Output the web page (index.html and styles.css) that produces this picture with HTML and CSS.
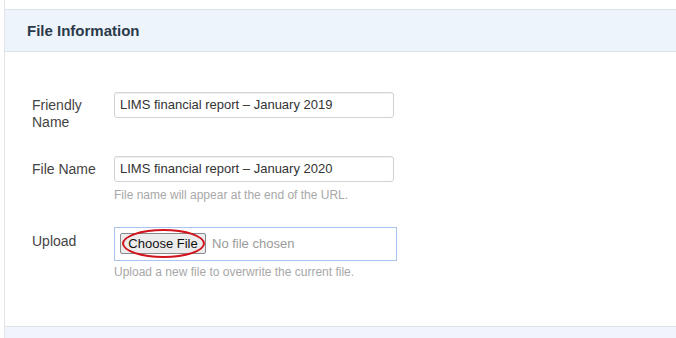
FILE: index.html
```html
<!DOCTYPE html>
<html>
<head>
<meta charset="utf-8">
<link rel="stylesheet" href="styles.css">
</head>
<body>
<div class="page">
  <div class="panel">
    <div class="top-band"></div>
    <div class="panel-header">File Information</div>
    <div class="panel-body">
      <div class="row">
        <label class="label">Friendly Name</label>
        <div class="control">
          <div class="input">LIMS financial report – January 2019</div>
        </div>
      </div>
      <div class="row">
        <label class="label">File Name</label>
        <div class="control">
          <div class="input">LIMS financial report – January 2020</div>
          <div class="help">File name will appear at the end of the URL.</div>
        </div>
      </div>
      <div class="row">
        <label class="label label-upload">Upload</label>
        <div class="control">
          <div class="upload">
            <span class="choose">Choose File</span>
            <span class="nofile">No file chosen</span>
            <span class="circle"></span>
          </div>
          <div class="help help-upload">Upload a new file to overwrite the current file.</div>
        </div>
      </div>
    </div>
    <div class="panel-footer"></div>
  </div>
</div>
</body>
</html>
```

FILE: styles.css
```css
html, body {
  margin: 0;
  padding: 0;
  background: #ffffff;
  font-family: "Liberation Sans", Arial, sans-serif;
}
.page {
  padding-left: 4px;
  height: 338px;
  overflow: hidden;
}
.panel {
  border-left: 1px solid #e1e3e6;
  height: 338px;
  display: flex;
  flex-direction: column;
}
.top-band {
  height: 9px;
  background: #ffffff;
}
.panel-header {
  height: 41px;
  box-sizing: content-box;
  border-top: 1px solid #dae2ea;
  border-bottom: 1px solid #dae2ea;
  background: #eef4fb;
  padding-left: 22px;
  font-size: 15px;
  font-weight: bold;
  color: #2b3a4b;
  line-height: 41px;
}
.panel-body {
  height: 275px;
  flex: none;
  padding-top: 40px;
  box-sizing: border-box;
  border-bottom: 1px solid #dde3ea;
}
.row {
  display: flex;
  padding-left: 27px;
  margin-bottom: 25px;
}
.label {
  width: 82px;
  flex: none;
  font-size: 14px;
  line-height: 17px;
  color: #444;
  padding-top: 5px;
  padding-right: 10px;
  box-sizing: border-box;
}
.label-upload {
  padding-top: 6px;
}
.control {
  display: flex;
  flex-direction: column;
}
.input {
  width: 280px;
  height: 26px;
  box-sizing: border-box;
  border: 1px solid #d3d3d3;
  border-radius: 3px;
  box-shadow: inset 0 1px 1px rgba(0,0,0,0.06);
  padding-left: 5px;
  font-size: 13px;
  line-height: 24px;
  color: #333;
}
.help {
  font-size: 12px;
  line-height: 14px;
  color: #a8a8a8;
  margin-top: 6px;
}
.help-upload {
  margin-top: 4px;
}
.upload {
  position: relative;
  width: 283px;
  height: 34px;
  box-sizing: border-box;
  border: 1px solid #a9c4ee;
  padding: 5px 0 0 5px;
  display: flex;
  align-items: flex-start;
}
.choose {
  display: inline-block;
  width: 86px;
  height: 21px;
  box-sizing: border-box;
  border: 1px solid #8a8a8a;
  border-radius: 2px;
  background: #ececec;
  font-size: 13px;
  line-height: 19px;
  color: #111;
  text-align: center;
}
.nofile {
  font-size: 13px;
  line-height: 21px;
  color: #9a9a9a;
  margin-left: 6px;
}
.circle {
  position: absolute;
  left: 7px;
  top: 1px;
  width: 83px;
  height: 29px;
  box-sizing: border-box;
  border: 2px solid #d1141d;
  border-radius: 50%;
}
.panel-footer {
  flex: 1;
  background: #f1f5fb;
}
```
